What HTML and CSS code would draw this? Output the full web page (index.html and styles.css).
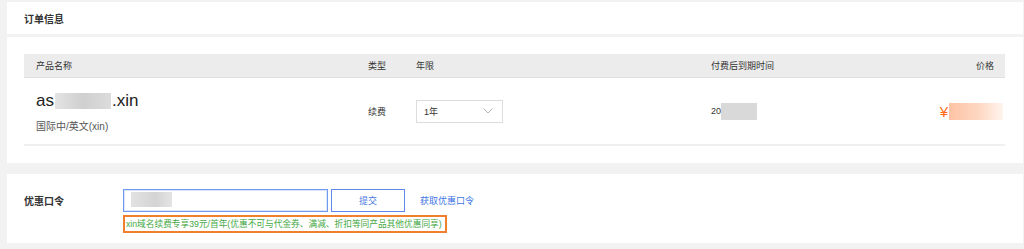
FILE: index.html
```html
<!DOCTYPE html>
<html lang="zh-CN">
<head>
    <meta charset="UTF-8">
    <title>订单信息</title>
    <link rel="stylesheet" href="styles.css">
</head>
<body>
    <div class="page">
        <div class="panel panel-head">
            <h2>订单信息</h2>
        </div>

        <div class="panel panel-body">
            <div class="order-table">
                <div class="row row-head">
                    <div class="cell">产品名称</div>
                    <div class="cell">类型</div>
                    <div class="cell">年限</div>
                    <div class="cell">付费后到期时间</div>
                    <div class="cell cell-price">价格</div>
                </div>
                <div class="row row-item">
                    <div class="cell">
                        <div class="domain">as<span class="mask mask-domain"></span>.xin</div>
                        <div class="domain-type">国际中/英文(xin)</div>
                    </div>
                    <div class="cell">续费</div>
                    <div class="cell">
                        <div class="select">
                            <span>1年</span>
                            <svg width="10" height="6" viewBox="0 0 10 6"><path d="M0.5 0.5 L5 5 L9.5 0.5" fill="none" stroke="#b5b5b5" stroke-width="1"/></svg>
                        </div>
                    </div>
                    <div class="cell">20<span class="mask mask-date"></span></div>
                    <div class="cell cell-price">
                        <span class="yen">¥</span><span class="mask mask-price"></span>
                    </div>
                </div>
            </div>
        </div>

        <div class="panel panel-coupon">
            <div class="coupon-label">优惠口令</div>
            <div class="coupon-main">
                <div class="coupon-row">
                    <div class="coupon-input"><span class="mask mask-code"></span></div>
                    <button class="btn-submit">提交</button>
                    <a class="coupon-link" href="#">获取优惠口令</a>
                </div>
                <div class="coupon-note">xin域名续费专享39元/首年(优惠不可与代金券、满减、折扣等同产品其他优惠同享)</div>
            </div>
        </div>
    </div>
</body>
</html>
```

FILE: styles.css
```css
:root {
    --bg: #f2f2f2;
    --text: #333;
    --text-light: #555;
    --blue: #3f76e4;
    --orange: #f0802e;
    --green: #45a845;
}

* {
    box-sizing: border-box;
    margin: 0;
    padding: 0;
}

body {
    background: var(--bg);
    color: var(--text);
    font-family: "Liberation Sans", "Noto Sans CJK SC", sans-serif;
    font-size: 9px;
    height: 249px;
    overflow: hidden;
}

.page {
    padding: 2px 1px 0 7px;
}

.panel {
    background: #fff;
}

.panel-head {
    height: 32px;
    display: flex;
    align-items: center;
    padding-left: 17px;
}

.panel-head h2 {
    font-size: 10px;
    font-weight: bold;
}

.panel-body {
    margin-top: 3px;
    padding: 17px 18px 17px 17px;
}

.row {
    display: grid;
    grid-template-columns: 332px 48px 295px 1fr auto;
    align-items: center;
}

.row .cell {
    padding-left: 12px;
}

.row .cell-price {
    padding: 0 11px 0 0;
    display: flex;
    align-items: center;
}

.row-item .cell-price {
    padding-right: 2px;
}

.row-head {
    height: 24px;
    background: #ececec;
    border-bottom: 1px solid #e0e0e0;
}

.row-item {
    height: 68px;
    border-bottom: 2px solid #f0f0f0;
}

.domain {
    font-size: 17px;
    color: #222;
    display: flex;
    align-items: center;
    line-height: 20px;
    margin-top: 2px;
}

.domain-type {
    margin-top: 7px;
    font-size: 10px;
    color: var(--text-light);
}

.mask {
    display: inline-block;
    background: #d9d9d9;
}

.mask-domain {
    width: 56px;
    height: 16px;
    margin: 0 1px;
    background: linear-gradient(90deg, #e4e4e4, #cfcfcf 50%, #dcdcdc);
}

.mask-date {
    width: 36px;
    height: 17px;
    vertical-align: middle;
}

.mask-price {
    width: 54px;
    height: 17px;
    background: linear-gradient(90deg, #fdc3a4, #fed7c2 55%, #fff4ee);
}

.yen {
    color: #ff6a1a;
    font-size: 15px;
    margin-right: 1px;
}

.select {
    width: 87px;
    height: 23px;
    border: 1px solid #dcdcdc;
    display: flex;
    align-items: center;
    justify-content: space-between;
    padding: 0 9px 0 7px;
}

.panel-coupon {
    margin-top: 11px;
    height: 69px;
    display: flex;
    padding: 15px 0 0 17px;
}

.coupon-label {
    width: 99px;
    font-size: 10px;
    font-weight: bold;
    line-height: 24px;
    margin-top: 1px;
}

.coupon-row {
    display: flex;
    align-items: center;
}

.coupon-input {
    width: 205px;
    height: 23px;
    border: 1px solid #7099ee;
    box-shadow: inset 0 0 0 1px #dbe5fb;
    padding: 2px 0 0 7px;
}

.mask-code {
    width: 41px;
    height: 15px;
    background: linear-gradient(90deg, #e2e2e2, #d4d4d4 60%, #e4e4e4);
}

.btn-submit {
    width: 74px;
    height: 23px;
    margin-left: 3px;
    background: #fff;
    border: 1px solid #5d88ea;
    color: #4a78e0;
    font: inherit;
}

.coupon-link {
    margin-left: 15px;
    color: var(--blue);
    text-decoration: none;
}

.coupon-note {
    margin-top: 3px;
    width: 324px;
    height: 18px;
    border: 2px solid var(--orange);
    color: var(--green);
    font-size: 8.7px;
    line-height: 14px;
    padding-left: 1px;
    white-space: nowrap;
    overflow: hidden;
}
```
